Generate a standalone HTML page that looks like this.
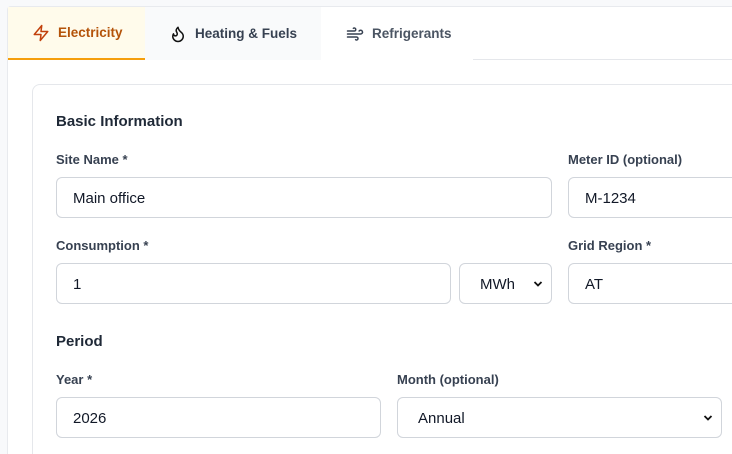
<!DOCTYPE html>
<html style="width:732px;height:454px;overflow:hidden"><head><style>
*{box-sizing:border-box;margin:0;padding:0}
body{width:732px;height:454px;overflow:hidden;background:#f8f9fb;font-family:"Liberation Sans",sans-serif;position:relative}
.outer{position:absolute;left:7px;top:6px;width:725px;height:448px;background:#fff;border:1px solid #e8eaee;border-right:none;border-bottom:none;border-radius:4px 0 0 0}
.tab{position:absolute;top:0;height:53px;display:flex;align-items:center;font-size:13.5px;font-weight:bold;color:#374151}
.tab svg{margin-right:8px}
.line{position:absolute;left:465px;top:52px;width:300px;height:1px;background:#e5e7eb}
.card{position:absolute;left:32px;top:84px;width:700px;height:370px;border:1px solid #e5e7eb;border-right:none;border-bottom:none;border-radius:8px 0 0 0;background:#fff}
.h{position:absolute;left:56px;font-size:15px;font-weight:bold;color:#1f2937}
.l{position:absolute;font-size:13px;font-weight:bold;color:#374151}
.i{position:absolute;height:41px;border:1px solid #d1d5db;border-radius:6px;background:#fff;font-size:15px;color:#111827;padding-left:16px;padding-top:2px;display:flex;align-items:center}
.chev{position:absolute;right:8px;top:15px}
</style></head><body>
<div class="outer">
 <div class="tab" style="left:0;width:137px;background:#fffbeb;border-bottom:2px solid #f59e0b;color:#b45309;padding-left:24px">
  <svg width="18" height="18" viewBox="0 0 24 24" fill="none" stroke="#c2410c" stroke-width="2" stroke-linejoin="round"><path d="M13 2L3 14h9l-1 8 10-12h-9l1-8z"/></svg>Electricity</div>
 <div class="tab" style="left:137px;width:176px;background:#f9fafb;padding-left:24px">
  <svg width="18" height="18" viewBox="0 0 24 24" fill="none" stroke="#111" stroke-width="2" stroke-linecap="round" stroke-linejoin="round"><path d="M8.5 14.5A2.5 2.5 0 0 0 11 12c0-1.4-.5-2-1-3-1.1-2.1-.2-4 2-6 .5 2.5 2 4.9 4 6.5 2 1.6 3 3.5 3 5.5a7 7 0 1 1-14 0c0-1.2.4-2.3 1-3.2.2 1.5 1.2 2.7 2.5 2.7z"/></svg>Heating &amp; Fuels</div>
 <div class="tab" style="left:313px;width:152px;background:#fff;padding-left:25px;color:#4b5563">
  <svg width="18" height="18" viewBox="0 0 24 24" fill="none" stroke="#374151" stroke-width="2" stroke-linecap="round"><path d="M12.8 19.6A2 2 0 1 0 14 16H2M17.5 8a2.5 2.5 0 1 1 2 4H2M9.8 4.4A2 2 0 1 1 11 8H2"/></svg>Refrigerants</div>
 <div class="line"></div>
</div>
<div class="card"></div>
<div class="h" style="top:113px">Basic Information</div>
<div class="l" style="left:56px;top:152px">Site Name *</div>
<div class="l" style="left:568px;top:152px">Meter ID (optional)</div>
<div class="i" style="left:56px;top:177px;width:496px">Main office</div>
<div class="i" style="left:568px;top:177px;width:200px">M-1234</div>
<div class="l" style="left:56px;top:238px">Consumption *</div>
<div class="l" style="left:568px;top:238px">Grid Region *</div>
<div class="i" style="left:56px;top:263px;width:395px">1</div>
<div class="i" style="left:459px;top:263px;width:93px;padding-left:20px">MWh<svg class="chev" width="10" height="10" viewBox="0 0 10 10"><path d="M1.5 3l3.5 3.5L8.5 3" fill="none" stroke="#111" stroke-width="1.8"/></svg></div>
<div class="i" style="left:568px;top:263px;width:200px">AT</div>
<div class="h" style="top:333px">Period</div>
<div class="l" style="left:56px;top:372px">Year *</div>
<div class="l" style="left:397px;top:372px">Month (optional)</div>
<div class="i" style="left:56px;top:397px;width:325px">2026</div>
<div class="i" style="left:397px;top:397px;width:325px;padding-left:20px">Annual<svg class="chev" width="10" height="10" viewBox="0 0 10 10"><path d="M1.5 3l3.5 3.5L8.5 3" fill="none" stroke="#111" stroke-width="1.8"/></svg></div>
</body></html>
